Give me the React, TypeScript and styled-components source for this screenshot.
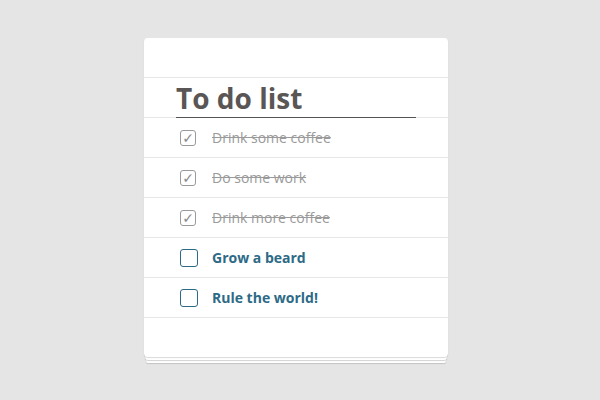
import React from 'react';
import styled, { createGlobalStyle } from 'styled-components';

const GlobalStyle = createGlobalStyle`
  html, body {
    margin: 0;
    padding: 0;
    background-color: #e5e5e5;
    font-family: "Open Sans", "Liberation Sans", sans-serif;
  }
`;

const Page = styled.div`
  width: 600px;
  height: 400px;
  box-sizing: border-box;
  padding: 38px 0 0 144px;
`;

const Paper = styled.div`
  width: 304px;
  background-color: #fff;
  border-radius: 4px;
  padding: 39px 0 39px;
  box-shadow:
    0 1px 1px rgba(0, 0, 0, 0.15),
    0 4px 0 -1px #fff,
    0 5px 1px -1px rgba(0, 0, 0, 0.18),
    0 8px 0 -2px #fff,
    0 9px 1px -2px rgba(0, 0, 0, 0.15);
`;

const List = styled.ul`
  list-style: none;
  margin: 0;
  padding: 0;
  border-top: 1px solid #e6e6e6;
`;

const Row = styled.li`
  height: 40px;
  box-sizing: border-box;
  border-bottom: 1px solid #e6e6e6;
  padding-left: 32px;
  display: flex;
  align-items: center;
`;

const TitleRow = styled.li`
  height: 40px;
  box-sizing: border-box;
  padding: 0 32px;
  display: flex;
  align-items: flex-end;
  border-bottom: 1px solid #e6e6e6;
`;

const Title = styled.h1`
  flex: 1;
  margin: 0 0 -1px;
  font-size: 28px;
  font-weight: 700;
  line-height: 38px;
  color: #5a5655;
  border-bottom: 1px solid #555;
`;

const Check = styled.span<{ done?: boolean }>`
  box-sizing: border-box;
  width: ${p => (p.done ? 16 : 18)}px;
  height: ${p => (p.done ? 16 : 18)}px;
  margin-left: 4px;
  margin-right: ${p => (p.done ? 16 : 14)}px;
  border: 1px solid ${p => (p.done ? '#9a9a9a' : '#2d6a86')};
  border-radius: 3px;
  display: flex;
  align-items: center;
  justify-content: center;
  color: #8a8a8a;
  font-family: "DejaVu Sans", sans-serif;
  font-size: 14px;
  line-height: 1;
`;

const Label = styled.span<{ done?: boolean }>`
  font-size: 14px;
  font-weight: ${p => (p.done ? 400 : 700)};
  color: ${p => (p.done ? '#9a9a9a' : '#2d6a86')};
  text-decoration: ${p => (p.done ? 'line-through' : 'none')};
`;

const items = [
  { text: 'Drink some coffee', done: true },
  { text: 'Do some work', done: true },
  { text: 'Drink more coffee', done: true },
  { text: 'Grow a beard', done: false },
  { text: 'Rule the world!', done: false },
];

const App: React.FC = () => {
  return (
    <Page>
      <GlobalStyle />
      <Paper>
        <List>
          <TitleRow>
            <Title>To do list</Title>
          </TitleRow>
          {items.map(item => (
            <Row key={item.text}>
              <Check done={item.done}>{item.done ? '✓' : ''}</Check>
              <Label done={item.done}>{item.text}</Label>
            </Row>
          ))}
        </List>
      </Paper>
    </Page>
  );
};

export default App;
